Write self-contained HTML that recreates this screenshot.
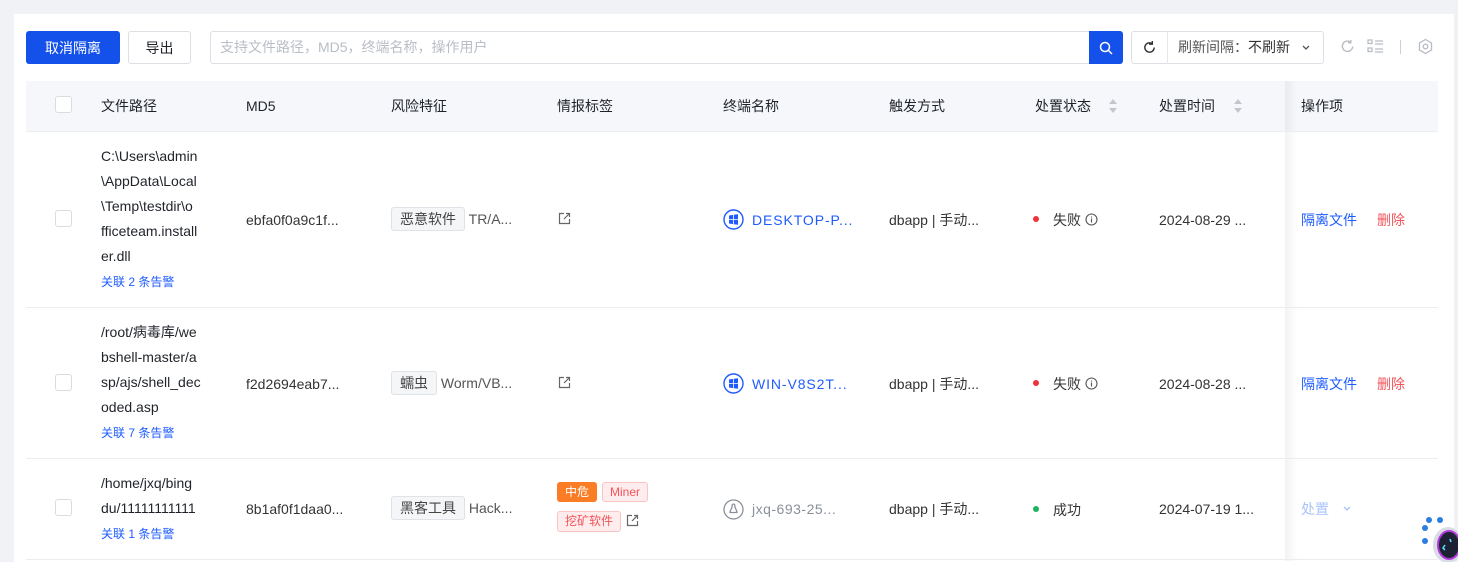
<!DOCTYPE html>
<html><head><meta charset="utf-8"><style>
*{box-sizing:border-box;margin:0;padding:0}
html,body{width:1458px;height:562px;overflow:hidden}
body{background:#f0f2f5;font-family:"Liberation Sans","Noto Sans CJK SC",sans-serif;font-size:14px;color:#1f2329;position:relative}
.card{position:absolute;left:14px;top:14px;width:1440px;height:548px;background:#fff}
.a{position:absolute;white-space:nowrap;line-height:20px}
.btn{position:absolute;height:33px;border-radius:3px;display:flex;align-items:center;justify-content:center;font-size:14px}
.cb{position:absolute;width:17px;height:17px;border:1px solid #d9dce1;border-radius:3px;background:#fff}
.tag{display:inline-block;height:24px;line-height:22px;padding:0 8px;border:1px solid #dfe2e6;background:#f5f6f8;border-radius:3px;color:#444;font-size:14px}
.line{position:absolute;left:26px;width:1412px;height:1px;background:#ebedf0}
.dot{display:inline-block;width:6px;height:6px;border-radius:50%;margin-right:14px;vertical-align:middle;position:relative;top:-2px}
.path{position:absolute;left:101px;font-size:14px;line-height:25px;color:#1f2329}
.lnk{font-size:12px;color:#1f5cff}
.h{top:96px}
</style></head><body>
<div class="card"></div>
<div class="btn" style="left:26px;top:31px;width:94px;background:#1450ea;color:#fff">取消隔离</div>
<div class="btn" style="left:128px;top:31px;width:63px;border:1px solid #dcdfe4;background:#fff">导出</div>
<div class="a" style="left:210px;top:31px;width:880px;height:33px;border:1px solid #dcdfe4;border-radius:3px 0 0 3px;color:#b9bec6;padding-left:9px;line-height:31px">支持文件路径，MD5，终端名称，操作用户</div>
<div class="btn" style="left:1089px;top:31px;width:34px;background:#1450ea;border-radius:0 3px 3px 0"><svg width="14" height="14" viewBox="0 0 14 14" fill="none" stroke="#fff" stroke-width="1.5"><circle cx="6" cy="6" r="4.5"/><path d="M9.5 9.5L13 13"/></svg></div>
<div class="a" style="left:1131px;top:31px;width:193px;height:33px;border:1px solid #dcdfe4;border-radius:3px"></div>
<div class="a" style="left:1167px;top:31px;width:1px;height:33px;background:#e5e7ea"></div>
<svg class="a" style="left:1142px;top:40px" width="15" height="15" viewBox="0 0 16 16" fill="none" stroke="#333" stroke-width="1.5"><path d="M13 8A5 5 0 1 1 11 4"/><path d="M11 1v3.5h-3.5"/></svg>
<div class="a" style="left:1178px;top:37px;color:#555">刷新间隔：<span style="color:#333">不刷新</span></div>
<svg class="a" style="left:1301px;top:44px" width="10" height="8" viewBox="0 0 10 8" fill="none" stroke="#555" stroke-width="1.3"><path d="M2 2l3 3 3-3"/></svg>
<svg class="a" style="left:1340px;top:39px" width="15" height="15" viewBox="0 0 16 16" fill="none" stroke="#b8bcc3" stroke-width="1.5"><path d="M13.5 8A5.5 5.5 0 1 1 11.5 3.5"/><path d="M11.5 1v3h-3"/></svg>
<svg class="a" style="left:1367px;top:39px" width="17" height="15" viewBox="0 0 17 15" fill="none" stroke="#b8bcc3" stroke-width="1.3"><rect x="1" y="1" width="4" height="3.5"/><rect x="1" y="9" width="4" height="3.5"/><path d="M8 2h8M8 5h8M8 10h8M8 13h8"/></svg>
<div class="a" style="left:1400px;top:40px;width:1px;height:14px;background:#ccd0d5"></div>
<svg class="a" style="left:1417px;top:38px" width="17" height="17" viewBox="0 0 17 17" fill="none" stroke="#b8bcc3" stroke-width="1.3"><path d="M8.5 1.5l6 3.5v7l-6 3.5-6-3.5v-7z"/><circle cx="8.5" cy="8.5" r="2.3"/></svg>

<div class="a" style="left:26px;top:81px;width:1412px;height:50px;background:#f5f7fa"></div>
<div class="cb" style="left:55px;top:96px"></div>
<div class="a h" style="left:101px">文件路径</div>
<div class="a h" style="left:246px">MD5</div>
<div class="a h" style="left:391px">风险特征</div>
<div class="a h" style="left:557px">情报标签</div>
<div class="a h" style="left:723px">终端名称</div>
<div class="a h" style="left:889px">触发方式</div>
<div class="a h" style="left:1035px">处置状态</div>
<div class="a h" style="left:1159px">处置时间</div>
<svg class="a" style="left:1108px;top:98px" width="10" height="16" viewBox="0 0 10 16" fill="#c3c7cd"><path d="M5 1l4 5H1zM5 15l4-5H1z"/></svg>
<svg class="a" style="left:1233px;top:98px" width="10" height="16" viewBox="0 0 10 16" fill="#c3c7cd"><path d="M5 1l4 5H1zM5 15l4-5H1z"/></svg>
<div class="a" style="left:1285px;top:81px;width:12px;height:480px;background:linear-gradient(to right,rgba(0,0,0,0.05),rgba(0,0,0,0))"></div>
<div class="a h" style="left:1301px">操作项</div>
<div class="line" style="top:131px"></div>

<!-- row1 -->
<div class="cb" style="left:55px;top:210px"></div>
<div class="path" style="top:144px">C:\Users\admin<br>\AppData\Local<br>\Temp\testdir\o<br>fficeteam.install<br>er.dll</div>
<div class="a lnk" style="left:101px;top:272px">关联 2 条告警</div>
<div class="a" style="left:246px;top:210px;color:#333">ebfa0f0a9c1f...</div>
<div class="a" style="left:391px;top:207px"><span class="tag">恶意软件</span> <span style="color:#555">TR/A...</span></div>
<svg class="a" style="left:558px;top:212px" width="13" height="13" viewBox="0 0 13 13" fill="none" stroke="#666" stroke-width="1.2"><path d="M6 1.5H1.5v10h10V7M8 1.5h3.5V5M11.5 1.5L6 7"/></svg>
<svg class="a" style="left:723px;top:209px" width="21" height="21" viewBox="0 0 21 21"><circle cx="10.5" cy="10.5" r="9.5" fill="none" stroke="#1f5cff" stroke-width="1.4"/><path d="M6 6.5l4-.6v4.2H6zM10.8 5.8l4.2-.6v4.9h-4.2zM6 10.9h4v4.2l-4-.6zM10.8 10.9H15v4.9l-4.2-.6z" fill="#1f5cff"/></svg>
<div class="a" style="left:752px;top:210px;color:#1f5cff;letter-spacing:0.9px">DESKTOP-P...</div>
<div class="a" style="left:889px;top:210px;color:#333">dbapp | 手动...</div>
<div class="a" style="left:1033px;top:210px;color:#333"><span class="dot" style="background:#f2323b"></span>失败 <svg width="13" height="13" viewBox="0 0 13 13" style="vertical-align:-1px" fill="none" stroke="#555" stroke-width="1.1"><circle cx="6.5" cy="6.5" r="5.5"/><path d="M6.5 5.5v4M6.5 3.5v1"/></svg></div>
<div class="a" style="left:1159px;top:210px;color:#333">2024-08-29 ...</div>
<div class="a" style="left:1301px;top:210px;color:#1f5cff">隔离文件</div>
<div class="a" style="left:1377px;top:210px;color:#f2545b">删除</div>
<div class="line" style="top:307px"></div>

<!-- row2 -->
<div class="cb" style="left:55px;top:374px"></div>
<div class="path" style="top:320px">/root/病毒库/we<br>bshell-master/a<br>sp/ajs/shell_dec<br>oded.asp</div>
<div class="a lnk" style="left:101px;top:423px">关联 7 条告警</div>
<div class="a" style="left:246px;top:374px;color:#333">f2d2694eab7...</div>
<div class="a" style="left:391px;top:371px"><span class="tag">蠕虫</span> <span style="color:#555">Worm/VB...</span></div>
<svg class="a" style="left:558px;top:376px" width="13" height="13" viewBox="0 0 13 13" fill="none" stroke="#666" stroke-width="1.2"><path d="M6 1.5H1.5v10h10V7M8 1.5h3.5V5M11.5 1.5L6 7"/></svg>
<svg class="a" style="left:723px;top:373px" width="21" height="21" viewBox="0 0 21 21"><circle cx="10.5" cy="10.5" r="9.5" fill="none" stroke="#1f5cff" stroke-width="1.4"/><path d="M6 6.5l4-.6v4.2H6zM10.8 5.8l4.2-.6v4.9h-4.2zM6 10.9h4v4.2l-4-.6zM10.8 10.9H15v4.9l-4.2-.6z" fill="#1f5cff"/></svg>
<div class="a" style="left:752px;top:374px;color:#1f5cff;letter-spacing:0.9px">WIN-V8S2T...</div>
<div class="a" style="left:889px;top:374px;color:#333">dbapp | 手动...</div>
<div class="a" style="left:1033px;top:374px;color:#333"><span class="dot" style="background:#f2323b"></span>失败 <svg width="13" height="13" viewBox="0 0 13 13" style="vertical-align:-1px" fill="none" stroke="#555" stroke-width="1.1"><circle cx="6.5" cy="6.5" r="5.5"/><path d="M6.5 5.5v4M6.5 3.5v1"/></svg></div>
<div class="a" style="left:1159px;top:374px;color:#333">2024-08-28 ...</div>
<div class="a" style="left:1301px;top:374px;color:#1f5cff">隔离文件</div>
<div class="a" style="left:1377px;top:374px;color:#f2545b">删除</div>
<div class="line" style="top:458px"></div>

<!-- row3 -->
<div class="cb" style="left:55px;top:499px"></div>
<div class="path" style="top:471px">/home/jxq/bing<br>du/11111111111</div>
<div class="a lnk" style="left:101px;top:524px">关联 1 条告警</div>
<div class="a" style="left:246px;top:499px;color:#333">8b1af0f1daa0...</div>
<div class="a" style="left:391px;top:496px"><span class="tag">黑客工具</span> <span style="color:#555">Hack...</span></div>
<div class="a" style="left:557px;top:482px;height:20px;line-height:20px;padding:0 8px;background:#fa7d25;color:#fff;border-radius:3px;font-size:12px">中危</div>
<div class="a" style="left:602px;top:482px;height:20px;line-height:18px;padding:0 7px;background:#ffecec;border:1px solid #fbc4c4;color:#f2545b;border-radius:3px;font-size:12px">Miner</div>
<div class="a" style="left:557px;top:511px;height:21px;line-height:19px;padding:0 7px;background:#ffecec;border:1px solid #fbc4c4;color:#f2545b;border-radius:3px;font-size:12px">挖矿软件</div>
<svg class="a" style="left:626px;top:514px" width="13" height="13" viewBox="0 0 13 13" fill="none" stroke="#666" stroke-width="1.2"><path d="M6 1.5H1.5v10h10V7M8 1.5h3.5V5M11.5 1.5L6 7"/></svg>
<svg class="a" style="left:723px;top:499px" width="21" height="21" viewBox="0 0 21 21" fill="none" stroke="#8a9099" stroke-width="1.3"><circle cx="10.5" cy="10.5" r="9.5"/><path d="M10.5 5c-1.2 0-1.5 1.5-1.5 3 0 1.5-2 3-2 5.5h7c0-2.5-2-4-2-5.5 0-1.5-.3-3-1.5-3z"/></svg>
<div class="a" style="left:752px;top:499px;color:#8a9099;letter-spacing:0.5px">jxq-693-25...</div>
<div class="a" style="left:889px;top:499px;color:#333">dbapp | 手动...</div>
<div class="a" style="left:1033px;top:500px;color:#333"><span class="dot" style="background:#1fb45e"></span>成功</div>
<div class="a" style="left:1159px;top:499px;color:#333">2024-07-19 1...</div>
<div class="a" style="left:1301px;top:499px;color:#a9c3fa">处置</div>
<svg class="a" style="left:1342px;top:505px" width="10" height="8" viewBox="0 0 10 8" fill="none" stroke="#a9c3fa" stroke-width="1.3"><path d="M2 2l3 3 3-3"/></svg>
<div class="line" style="top:559px"></div>

<svg class="a" style="left:1420px;top:515px;overflow:visible" width="40" height="47" viewBox="0 0 40 47"><circle cx="9" cy="5" r="3" fill="#2a7de1"/><circle cx="20" cy="5" r="3" fill="#2a7de1"/><circle cx="5" cy="13" r="3" fill="#2a7de1"/><circle cx="5" cy="26" r="3" fill="#2a7de1"/><ellipse cx="28" cy="30" rx="15" ry="18" fill="#d9dbe6"/><ellipse cx="29" cy="30" rx="11" ry="14" fill="#1c2233" stroke="#b03ad6" stroke-width="2"/><path d="M25 30l-2 3 2 2M30 24l1 3" stroke="#5fe3ff" stroke-width="1.5" fill="none"/></svg>
</body></html>
